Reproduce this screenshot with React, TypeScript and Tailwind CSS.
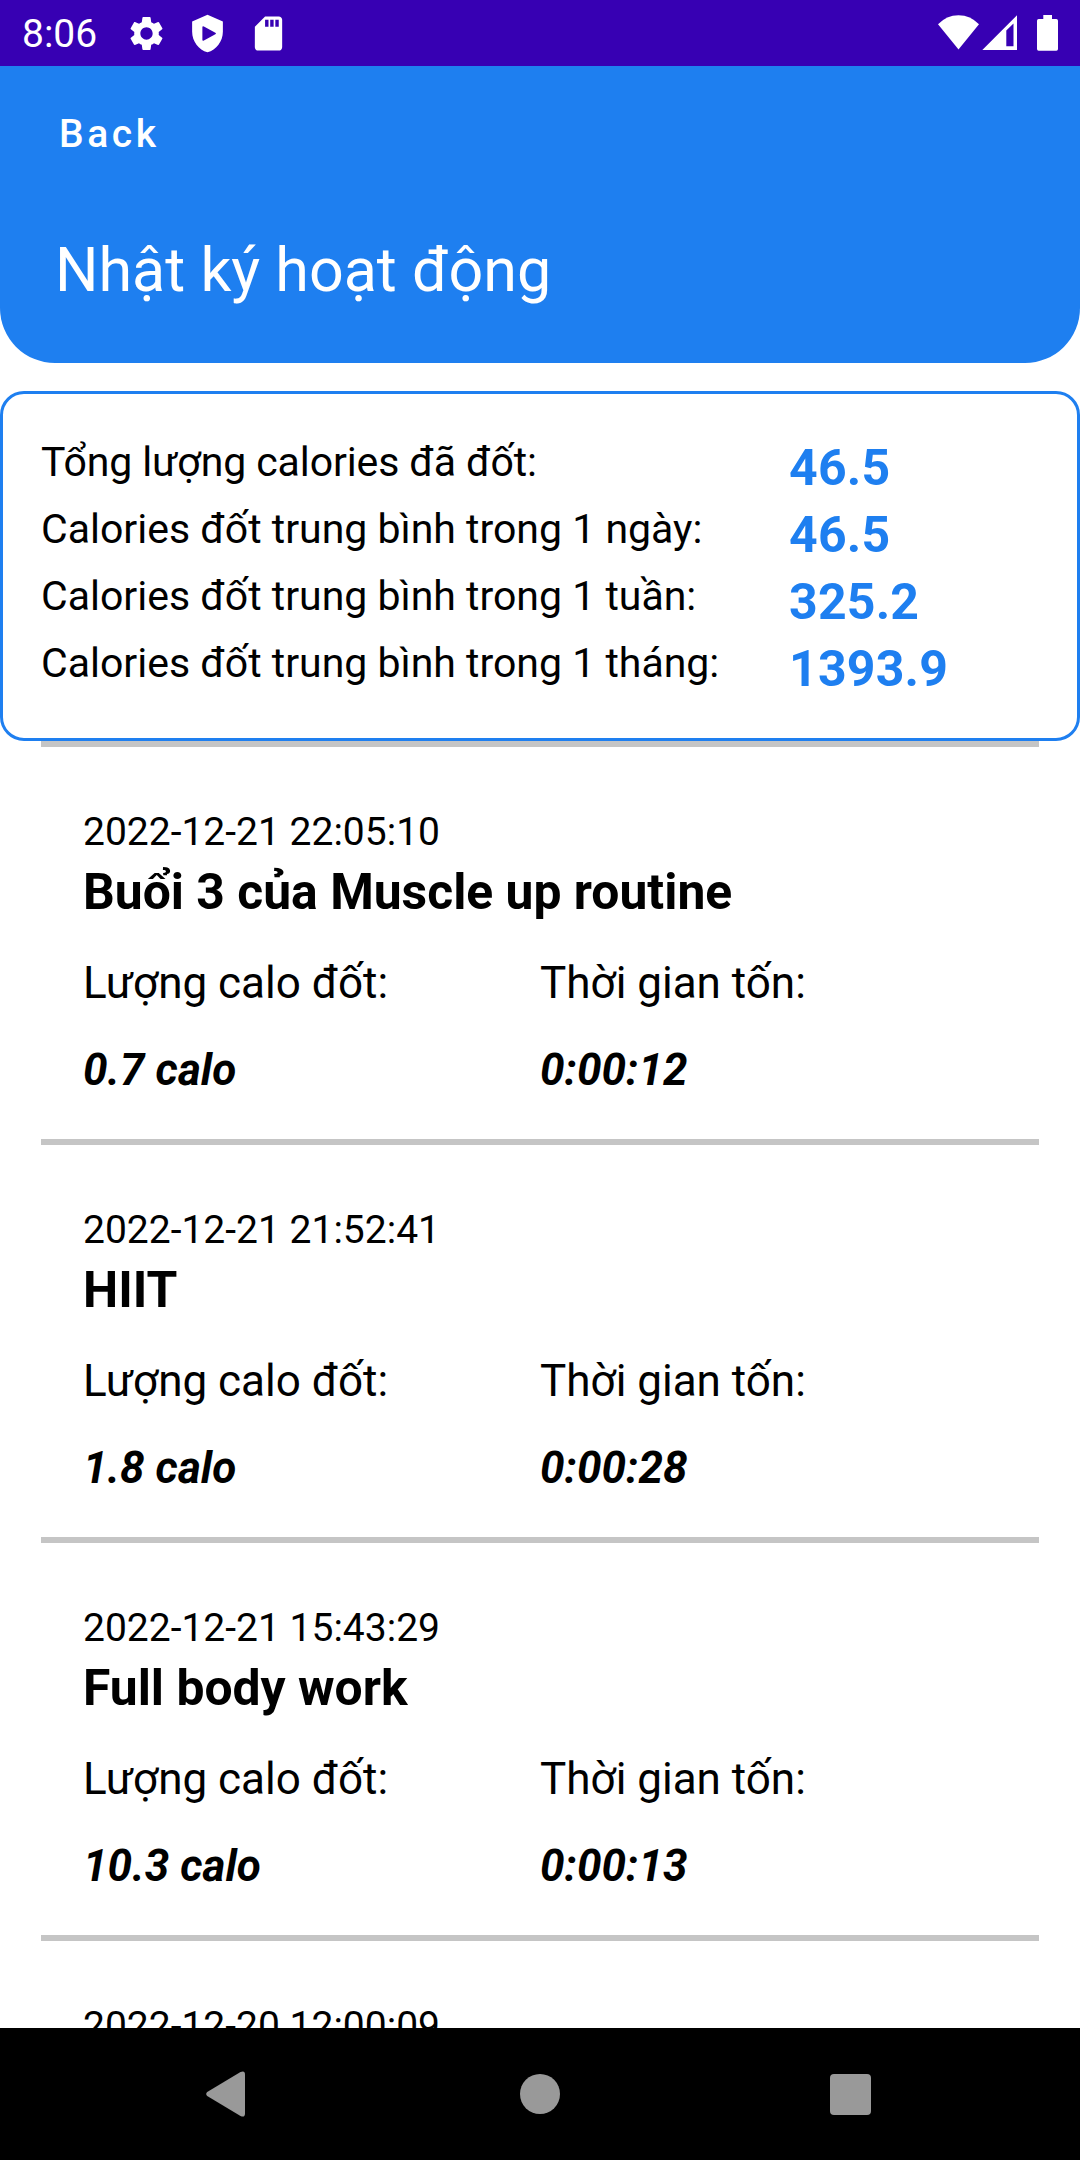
type Session = {
  date: string;
  title: string;
  calories: string;
  duration: string;
};

const stats = [
  { label: "Tổng lượng calories đã đốt:", value: "46.5" },
  { label: "Calories đốt trung bình trong 1 ngày:", value: "46.5" },
  { label: "Calories đốt trung bình trong 1 tuần:", value: "325.2" },
  { label: "Calories đốt trung bình trong 1 tháng:", value: "1393.9" },
];

const sessions: Session[] = [
  { date: "2022-12-21 22:05:10", title: "Buổi 3 của Muscle up routine", calories: "0.7 calo", duration: "0:00:12" },
  { date: "2022-12-21 21:52:41", title: "HIIT", calories: "1.8 calo", duration: "0:00:28" },
  { date: "2022-12-21 15:43:29", title: "Full body work", calories: "10.3 calo", duration: "0:00:13" },
];

function StatusBar() {
  return (
    <div className="flex h-[66px] shrink-0 items-center bg-[#3700b3] text-white">
      <span className="ml-[22px] w-[104px] pt-[2px] text-[39px] leading-[46px]">8:06</span>
      <div className="flex gap-5 fill-white">
        <svg className="size-[41px]" viewBox="0 0 24 24">
          <path d="M19.14 12.94c.04-.3.06-.61.06-.94 0-.32-.02-.64-.07-.94l2.03-1.58a.49.49 0 0 0 .12-.61l-1.92-3.32a.488.488 0 0 0-.59-.22l-2.39.96c-.5-.38-1.03-.7-1.62-.94l-.36-2.54a.484.484 0 0 0-.48-.41h-3.84c-.24 0-.43.17-.47.41l-.36 2.54c-.59.24-1.13.57-1.62.94l-2.39-.96c-.22-.08-.47 0-.59.22L2.74 8.87c-.12.21-.08.47.12.61l2.03 1.58c-.05.3-.09.63-.09.94s.02.64.07.94l-2.03 1.58a.49.49 0 0 0-.12.61l1.92 3.32c.12.22.37.29.59.22l2.39-.96c.5.38 1.03.7 1.62.94l.36 2.54c.05.24.24.41.48.41h3.84c.24 0 .44-.17.47-.41l.36-2.54c.59-.24 1.13-.56 1.62-.94l2.39.96c.22.08.47 0 .59-.22l1.92-3.32c.12-.22.07-.47-.12-.61l-2.01-1.58zM12 15.6c-1.98 0-3.6-1.62-3.6-3.6s1.62-3.6 3.6-3.6 3.6 1.62 3.6 3.6-1.62 3.6-3.6 3.6z" />
        </svg>
        <svg className="size-[41px]" viewBox="0 0 24 24" fillRule="evenodd">
          <path d="M12 1 3 5v6c0 5.55 3.84 10.74 9 12 5.16-1.26 9-6.45 9-12V5l-9-4zM9 8.4Q9 7.4 9.9 7.9L16.6 11.5Q17.4 12 16.6 12.5L9.9 16.1Q9 16.6 9 15.6z" />
        </svg>
        <svg className="size-[41px]" viewBox="0 0 24 24">
          <path d="M18 2h-8L4.02 8 4 20c0 1.1.9 2 2 2h12c1.1 0 2-.9 2-2V4c0-1.1-.9-2-2-2zm-6 6h-2V4h2v4zm3 0h-2V4h2v4zm3 0h-2V4h2v4z" />
        </svg>
      </div>
      <svg className="ml-auto mr-[22px] h-9 w-[120px] fill-white" viewBox="938 15 120 36">
        <path d="M958.5 49.5 938 24.3Q946.5 15.2 958.5 15.2T979 24.3Z" />
        <path fillRule="evenodd" d="M982.3 50 1017 15.2V50ZM1006.3 30.5V46.3H1013.5V23.5Z" />
        <path d="M1043.3 15h8.7v4h4.3q1.7 0 1.7 1.7v28.3q0 1.8-1.7 1.8h-17.6q-1.7 0-1.7-1.8v-28.3q0-1.7 1.7-1.7h4.6z" />
      </svg>
    </div>
  );
}

function SessionDate({ date }: { date: string }) {
  return <p className="mt-[62px] shrink-0 text-[39px] leading-[46px]">{date}</p>;
}

function SessionItem({ date, title, calories, duration }: Session) {
  return (
    <article className="flex h-[398px] shrink-0 flex-col border-b-[6px] border-[#c5c5c5] px-[42px]">
      <SessionDate date={date} />
      <h2 className="mt-2 text-[49.8px] leading-[58px] font-bold">{title}</h2>
      <div className="mt-9 grid grid-cols-2 gap-y-[35px] text-[44px] leading-[52px]">
        <span>Lượng calo đốt:</span>
        <span>Thời gian tốn:</span>
        <span className="font-bold italic tracking-[0.1px]">{calories}</span>
        <span className="font-bold italic tracking-[0.1px]">{duration}</span>
      </div>
    </article>
  );
}

function NavigationBar() {
  return (
    <nav className="flex h-[132px] shrink-0 items-center bg-black pl-[206px]">
      <svg className="h-[46px] w-[39px] fill-[#999999]" viewBox="0 0 39 46">
        <path d="M1.2 21 34.5 1Q39-1 39 3.5V42.5Q39 47 34.5 45L1.2 25Q-.8 23 1.2 21Z" />
      </svg>
      <span className="ml-[275px] size-10 rounded-full bg-[#999999]" />
      <span className="ml-[270px] size-[41px] rounded-[4px] bg-[#999999]" />
    </nav>
  );
}

export default function App() {
  return (
    <div className="flex h-[2160px] w-[1080px] flex-col overflow-hidden bg-white font-['Roboto',sans-serif] text-black">
      <StatusBar />
      <header className="h-[297px] shrink-0 rounded-b-[55px] bg-[#1e7ff0] pt-[38px] text-white">
        <button className="ml-[59px] block text-[39px] leading-[60px] font-medium tracking-[3.6px]">Back</button>
        <h1 className="mt-[70px] ml-[55px] text-[61px] leading-[72px]">Nhật ký hoạt động</h1>
      </header>
      <section className="mt-7 h-[350px] shrink-0 rounded-[24px] border-[3px] border-[#1e7ff0] pt-[39px] pl-[38px]">
        {stats.map((stat) => (
          <div key={stat.label} className="group flex h-[67px] items-start">
            <span className="mt-[5px] w-[748px] text-[41px] leading-[48px] group-first:tracking-[-0.1px]">{stat.label}</span>
            <span className="mt-[6px] text-[50px] leading-[58px] font-bold tracking-[0.2px] text-[#1e7ff0]">{stat.value}</span>
          </div>
        ))}
      </section>
      <main className="mx-[41px] flex min-h-0 flex-1 flex-col overflow-hidden border-t-[6px] border-[#c5c5c5]">
        {sessions.map((session) => (
          <SessionItem key={session.date} {...session} />
        ))}
        <div className="flex flex-col px-[42px]">
          <SessionDate date="2022-12-20 12:00:09" />
        </div>
      </main>
      <NavigationBar />
    </div>
  );
}
